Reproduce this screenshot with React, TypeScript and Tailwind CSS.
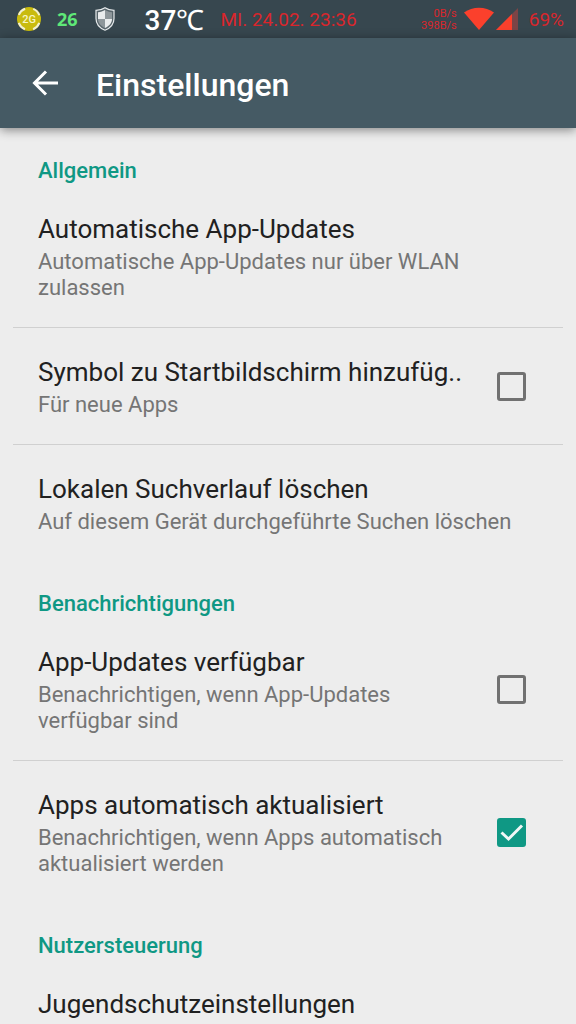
import React, { useState } from 'react';

interface Setting {
  id: string;
  title: string;
  summary?: string;
  checked?: boolean;
}

interface Section {
  title: string;
  items: Setting[];
}

const sections: Section[] = [
  {
    title: 'Allgemein',
    items: [
      { id: 'auto-updates', title: 'Automatische App-Updates', summary: 'Automatische App-Updates nur über WLAN zulassen' },
      { id: 'home-icon', title: 'Symbol zu Startbildschirm hinzufüg..', summary: 'Für neue Apps', checked: false },
      { id: 'clear-history', title: 'Lokalen Suchverlauf löschen', summary: 'Auf diesem Gerät durchgeführte Suchen löschen' },
    ],
  },
  {
    title: 'Benachrichtigungen',
    items: [
      { id: 'updates-available', title: 'App-Updates verfügbar', summary: 'Benachrichtigen, wenn App-Updates verfügbar sind', checked: false },
      { id: 'apps-updated', title: 'Apps automatisch aktualisiert', summary: 'Benachrichtigen, wenn Apps automatisch aktualisiert werden', checked: true },
    ],
  },
  {
    title: 'Nutzersteuerung',
    items: [{ id: 'parental', title: 'Jugendschutzeinstellungen' }],
  },
];

const StatusBar: React.FC = () => (
  <div className="flex h-[38px] shrink-0 items-center bg-[#37474f] pl-4 pr-3 text-[#d9262c]">
    <svg viewBox="0 0 26 26" className="size-[26px]">
      <circle cx="13" cy="13" r="12" fill="#c9bb0e" />
      <circle cx="13" cy="13" r="11" fill="none" stroke="#f1efd2" strokeWidth="2" strokeDasharray="9 8.28" strokeDashoffset="-4" />
      <text x="13" y="17" textAnchor="middle" fontSize="11" fontWeight="500" fill="#f7f5c4">2G</text>
    </svg>
    <span className="ml-[15px] font-['Open_Sans',sans-serif] text-lg font-bold text-[#5fe878]">26</span>
    <svg viewBox="0 0 20 24" className="ml-[17px] h-6 w-5">
      <path d="M10 .8C7.5 2.6 4.4 3.4 1 3.4v8c0 5.4 3.3 9.4 9 11.8 5.7-2.4 9-6.4 9-11.8v-8c-3.4 0-6.5-.8-9-2.6z" fill="#59666c" stroke="#e6eaec" strokeWidth="1.2" />
      <path d="M10 3v9H3V5.2C5.7 5 8 4.3 10 3z" fill="#e9eced" />
      <path d="M10 3v9h7V5.2C14.3 5 12 4.3 10 3zM3 12h7v9c-4.3-2-7-5-7-9z" fill="#8e979b" />
      <path d="M10 12h7c0 4-2.7 7-7 9z" fill="#e9eced" />
    </svg>
    <span className="ml-[30px] whitespace-nowrap pt-1 text-[28px] font-medium leading-8 text-white">37℃</span>
    <span className="ml-4 pt-0.5 text-[19px]">MI. 24.02. 23:36</span>
    <span className="ml-auto pt-0.5 text-right text-[11px] leading-3">
      0B/s
      <br />
      398B/s
    </span>
    <svg viewBox="0 0 32 24" className="ml-[6px] h-6 w-8">
      <path d="M1 5.5C9.5-.8 22.5-.8 31 5.5L16 23z" fill="#fb402c" />
    </svg>
    <svg viewBox="0 0 24 24" className="size-6">
      <path d="M1 23L23 1v22z" fill="#7c4446" />
      <path d="M1 23L17 7v16z" fill="#fb402c" />
    </svg>
    <span className="ml-[10px] pt-0.5 text-[19px]">69%</span>
  </div>
);

const SectionTitle: React.FC<{ children: React.ReactNode }> = ({ children }) => (
  <h2 className="px-[38px] pt-7 text-[22px] font-medium leading-[29px] text-[#0f9884]">{children}</h2>
);

const SettingText: React.FC<{ item: Setting }> = ({ item }) => (
  <span className="block min-w-0 flex-1">
    <span className="block whitespace-nowrap text-[26px] leading-8 text-[#212121]">{item.title}</span>
    {item.summary && <span className="mt-1 block text-[22px] leading-[26px] text-[#757575]">{item.summary}</span>}
  </span>
);

const SettingRow: React.FC<{ item: Setting }> = ({ item }) => {
  const [checked, setChecked] = useState(!!item.checked);
  const rowClass = 'flex w-full items-center px-[25px] pt-7 pb-[26px] text-left';

  if (item.checked === undefined) {
    return (
      <button type="button" className={rowClass}>
        <SettingText item={item} />
      </button>
    );
  }

  return (
    <label htmlFor={item.id} className={rowClass}>
      <SettingText item={item} />
      <span className="ml-6 mr-3 grid shrink-0 pb-0.5">
        <input
          id={item.id}
          type="checkbox"
          checked={checked}
          onChange={(e) => setChecked(e.target.checked)}
          className="col-start-1 row-start-1 size-[29px] appearance-none rounded-[3px] border-3 border-[#717171] checked:border-[#0f9884] checked:bg-[#0f9884]"
        />
        {checked && (
          <svg viewBox="0 0 29 29" className="pointer-events-none col-start-1 row-start-1 size-[29px]">
            <path d="M4.5 14.5l7 6.5L25 7.5" fill="none" stroke="#f0f7f6" strokeWidth="3" />
          </svg>
        )}
      </span>
    </label>
  );
};

const App: React.FC = () => (
  <div className="flex h-screen flex-col overflow-hidden bg-[#ededed] font-[Roboto,sans-serif]">
    <StatusBar />
    <header className="z-10 flex h-[90px] shrink-0 items-center bg-[#455a64] pl-8 text-white shadow-[0_2px_10px_rgba(0,0,0,0.45)]">
      <button type="button" aria-label="Zurück">
        <svg viewBox="0 0 26 26" className="size-[26px]">
          <path d="M26 13H2M14 1.5L2.5 13 14 24.5" fill="none" stroke="currentColor" strokeWidth="3" />
        </svg>
      </button>
      <h1 className="ml-[38px] pt-1 text-[32px] font-medium leading-9">Einstellungen</h1>
    </header>
    <main className="flex-1 overflow-y-auto [scrollbar-width:none]">
      {sections.map((section) => (
        <section key={section.title}>
          <SectionTitle>{section.title}</SectionTitle>
          <ul className="mx-[13px] divide-y divide-[#d0d0d0]">
            {section.items.map((item) => (
              <li key={item.id}>
                <SettingRow item={item} />
              </li>
            ))}
          </ul>
        </section>
      ))}
    </main>
  </div>
);

export default App;
